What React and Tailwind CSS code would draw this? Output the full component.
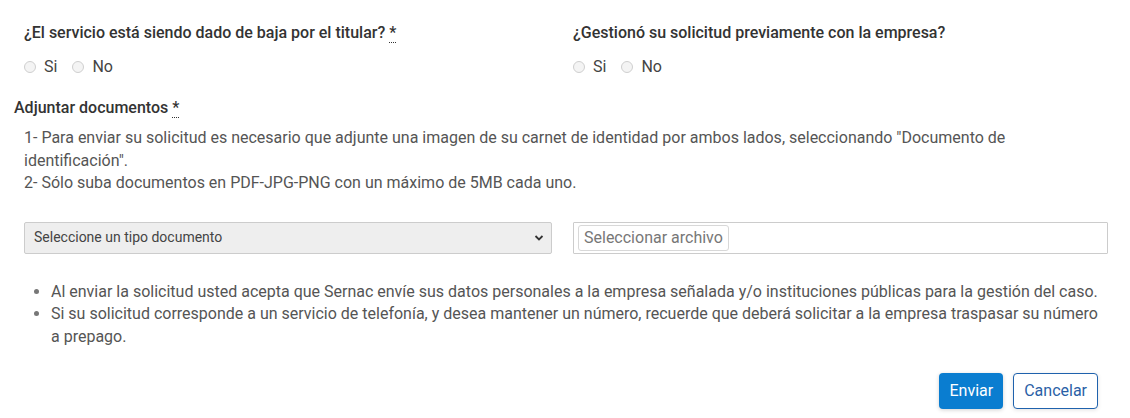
import React from 'react'

function Radio({ name, label }) {
  return (
    <label className="flex items-center gap-[8px] mr-[15px]">
      <input
        type="radio"
        name={name}
        className="appearance-none w-[12px] h-[12px] rounded-full border border-[#cfcfcf] bg-[#f4f4f4] m-0"
      />
      <span>{label}</span>
    </label>
  )
}

function Question({ name, title, required }) {
  return (
    <div>
      <div className="font-medium text-[#333] leading-[22px]">
        {title}
        {required && (
          <abbr title="requerido" className="ml-[4px] no-underline border-b border-dotted border-[#333] cursor-help">*</abbr>
        )}
      </div>
      <div className="flex items-center mt-[12px] text-[#444] leading-[22px]">
        <Radio name={name} label="Si" />
        <Radio name={name} label="No" />
      </div>
    </div>
  )
}

export default function App() {
  return (
    <div className="bg-white min-h-screen px-[14px] pt-[22px] text-[16px]" style={{ fontFamily: 'Roboto, "Liberation Sans", sans-serif' }}>
      <div className="grid grid-cols-[528px_535px] gap-[21px] px-[10px]">
        <Question name="baja" title="¿El servicio está siendo dado de baja por el titular?" required />
        <Question name="gestion" title="¿Gestionó su solicitud previamente con la empresa?" />
      </div>

      <div className="mt-[19px] font-medium text-[#333] leading-[22px]">
        Adjuntar documentos
        <abbr title="requerido" className="ml-[4px] no-underline border-b border-dotted border-[#333] cursor-help">*</abbr>
      </div>
      <div className="px-[10px] mt-[8px] text-[#555] leading-[22.5px]">
        <p>1- Para enviar su solicitud es necesario que adjunte una imagen de su carnet de identidad por ambos lados, seleccionando "Documento de identificación".</p>
        <p>2- Sólo suba documentos en PDF-JPG-PNG con un máximo de 5MB cada uno.</p>
      </div>

      <div className="grid grid-cols-[528px_535px] gap-[21px] px-[10px] mt-[27px]">
        <div className="relative">
          <select className="w-full h-[32px] appearance-none bg-[#eeeeee] border border-[#cccccc] rounded-[2px] pl-[9px] text-[14px] text-[#444] outline-none">
            <option>Seleccione un tipo documento</option>
          </select>
          <svg className="absolute right-[8px] top-[12px] pointer-events-none" width="10" height="8" viewBox="0 0 10 8">
            <path d="M1.5 2 L5 5.5 L8.5 2" fill="none" stroke="#333" strokeWidth="1.8" />
          </svg>
        </div>
        <div className="h-[32px] border border-[#cccccc] rounded-[1px] flex items-center px-[4px]">
          <span className="h-[26px] px-[5px] border border-[#d8d8d8] rounded-[3px] flex items-center text-[#777] leading-none">
            Seleccionar archivo
          </span>
        </div>
      </div>

      <ul className="list-disc pl-[37px] pr-[10px] mt-[27px] text-[#555] leading-[22.5px] marker:text-[#777]">
        <li>Al enviar la solicitud usted acepta que Sernac envíe sus datos personales a la empresa señalada y/o instituciones públicas para la gestión del caso.</li>
        <li>Si su solicitud corresponde a un servicio de telefonía, y desea mantener un número, recuerde que deberá solicitar a la empresa traspasar su número a prepago.</li>
      </ul>

      <div className="flex justify-end gap-[10px] mt-[25px] pr-[18px]">
        <button className="h-[36px] px-[10px] rounded-[4px] bg-[#0a7dd0] text-white shadow-[0_1px_4px_rgba(0,0,0,0.18)]">
          Enviar
        </button>
        <button className="h-[36px] px-[10px] rounded-[4px] border border-[#1f62ad] text-[#2a5fa6] bg-white shadow-[0_1px_4px_rgba(0,0,0,0.12)]">
          Cancelar
        </button>
      </div>
    </div>
  )
}
